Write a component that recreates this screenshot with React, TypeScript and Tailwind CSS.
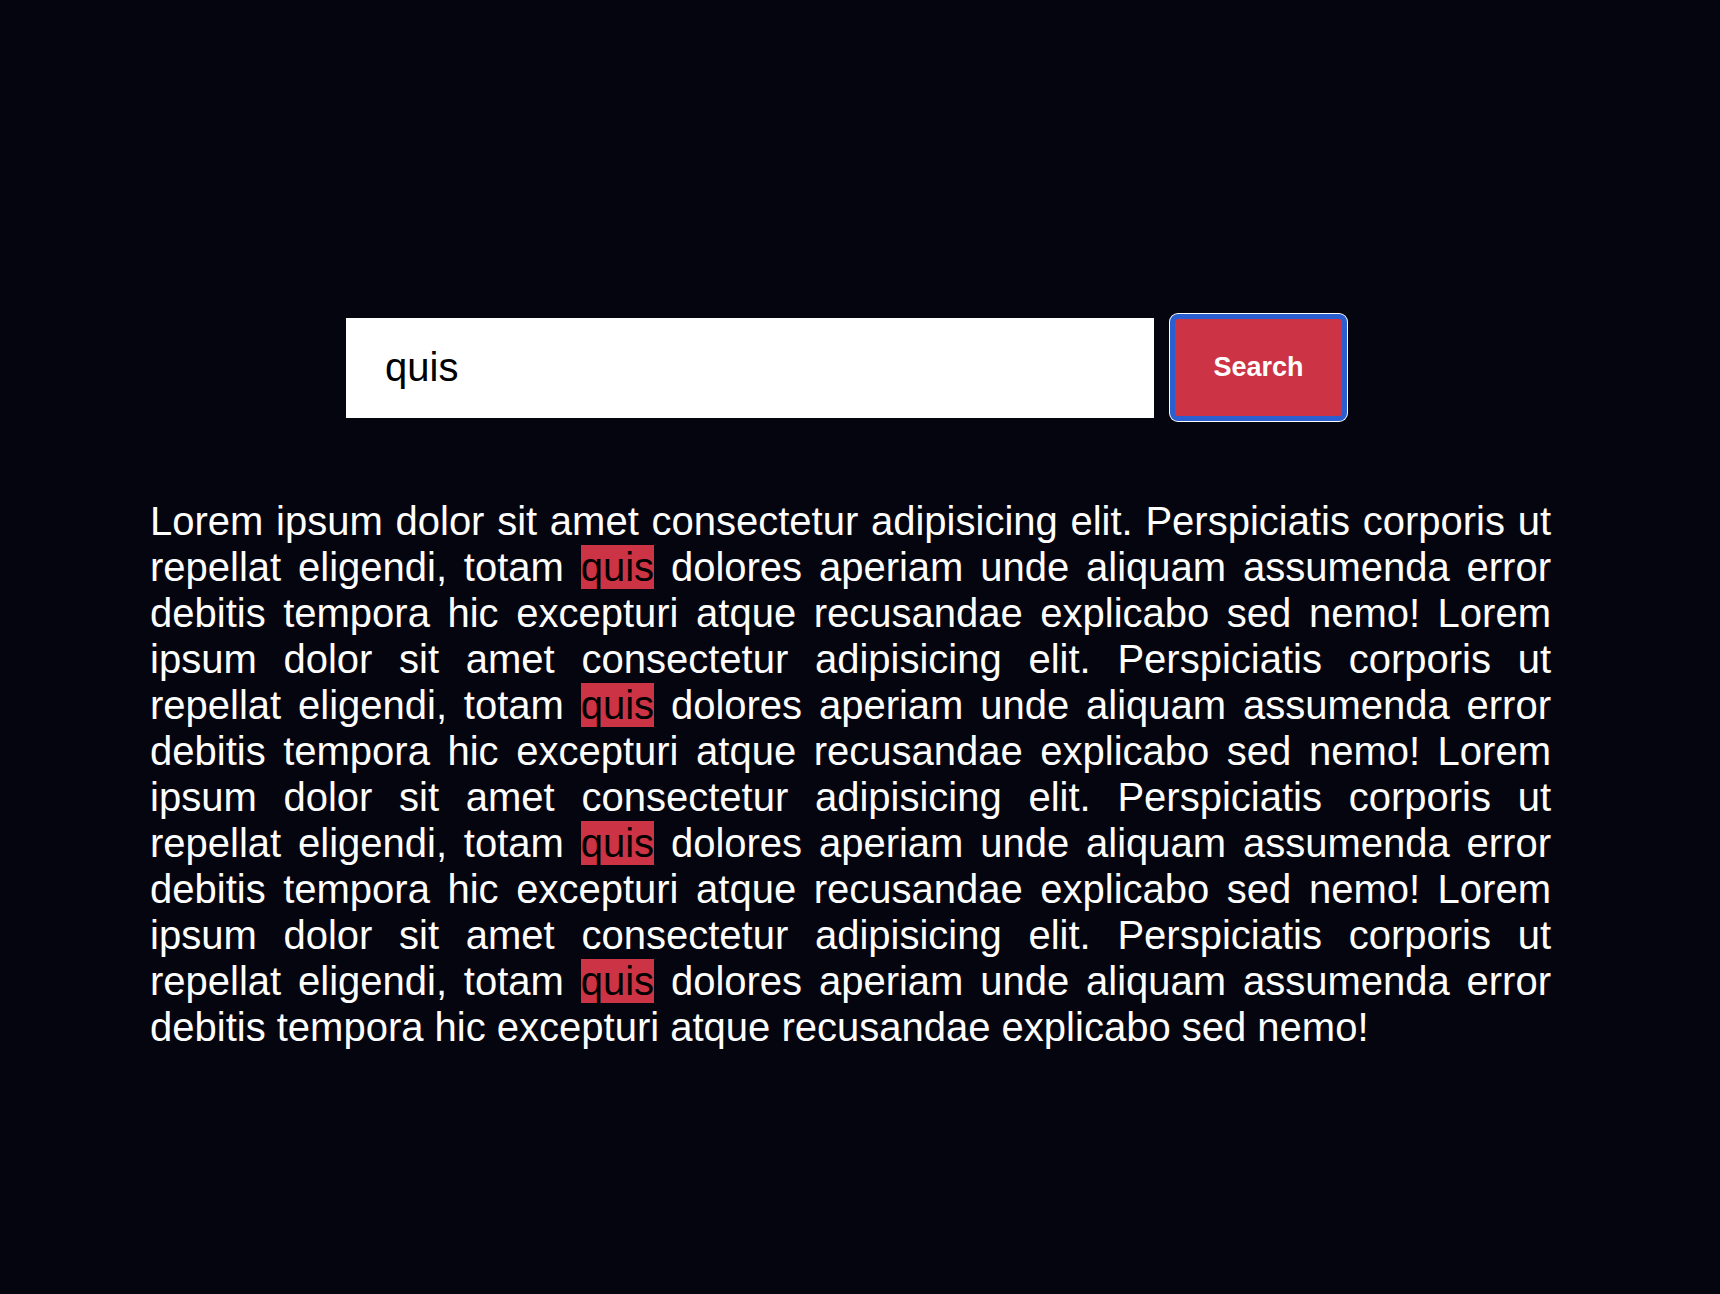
import React, { useState } from "react";

const chunk =
  "Lorem ipsum dolor sit amet consectetur adipisicing elit. Perspiciatis corporis ut repellat eligendi, totam quis dolores aperiam unde aliquam assumenda error debitis tempora hic excepturi atque recusandae explicabo sed nemo!";

const App: React.FC = () => {
  const [query, setQuery] = useState("quis");
  const text = [chunk, chunk, chunk, chunk].join(" ");

  // split into parts, mark matches of the query
  const parts = query ? text.split(new RegExp(`(${query})`, "g")) : [text];

  return (
    <div className="min-h-screen w-full bg-[#05050f] font-['Liberation_Sans',Arial,sans-serif] pt-[314px]">
      <div className="w-[1401px] ml-[150px]">
        {/* Search bar */}
        <div className="flex items-center gap-4 ml-[196px]">
          <input
            value={query}
            onChange={(e) => setQuery(e.target.value)}
            className="w-[808px] h-[100px] bg-white text-black text-[40px] pl-[39px] outline-none"
          />
          <button className="w-[177px] h-[107px] rounded-[8px] bg-[#cc3344] border-[5px] border-[#2b5fcf] ring-1 ring-white text-white font-bold text-[27px]">
            Search
          </button>
        </div>

        {/* Paragraph */}
        <p className="mt-[77px] text-white text-[40px] leading-[46px] text-justify">
          {parts.map((part, i) =>
            part === query ? (
              <mark key={i} className="bg-[#cc3344] text-black">
                {part}
              </mark>
            ) : (
              <span key={i}>{part}</span>
            )
          )}
        </p>
      </div>
    </div>
  );
};

export default App;
